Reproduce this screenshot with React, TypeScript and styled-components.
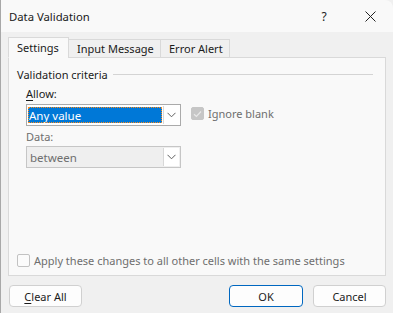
import styled, { createGlobalStyle } from "styled-components";

const Global = createGlobalStyle`
  html, body {
    margin: 0;
    padding: 0;
    background: #f0f0f0;
  }
  * {
    box-sizing: border-box;
  }
`;

const Window = styled.div`
  width: 393px;
  height: 313px;
  background: #f0f0f0;
  border-left: 1px solid #a8a8a8;
  border-top-right-radius: 8px;
  overflow: hidden;
  font-family: "Noto Sans", "Open Sans", sans-serif;
  font-size: 11px;
  color: #1b1b1b;
  display: flex;
  flex-direction: column;
`;

const TitleBar = styled.div`
  height: 32px;
  background: #f9f9f9;
  display: flex;
  align-items: center;
  padding-left: 8px;
`;

const Title = styled.div`
  flex: 1;
  font-size: 11.3px;
  color: #1a1a1a;
`;

const TitleButton = styled.div`
  width: 46px;
  height: 32px;
  display: flex;
  align-items: center;
  justify-content: center;
  font-size: 12px;
  color: #222;
`;

const Body = styled.div`
  flex: 1;
  display: flex;
  flex-direction: column;
  padding: 5px 7px 0 7px;
`;

const TabStrip = styled.div`
  display: flex;
  align-items: flex-end;
  height: 21px;
  position: relative;
  z-index: 1;
  margin-bottom: -1px;
`;

const Tab = styled.div<{ $active?: boolean; $w: number }>`
  width: ${(p) => p.$w}px;
  height: ${(p) => (p.$active ? "21px" : "19px")};
  padding-left: 8px;
  display: flex;
  align-items: center;
  background: ${(p) => (p.$active ? "#f9f9f9" : "#f0f0f0")};
  border: 1px solid #d9d9d9;
  border-bottom: ${(p) => (p.$active ? "1px solid #f9f9f9" : "1px solid #d9d9d9")};
  margin-left: ${(p) => (p.$active ? "0" : "-1px")};
  color: #1b1b1b;
`;

const Panel = styled.div`
  width: 378px;
  height: 219px;
  background: #f9f9f9;
  border: 1px solid #d9d9d9;
  padding: 8px 7px 0 8px;
  display: flex;
  flex-direction: column;
`;

const GroupHeader = styled.div`
  display: flex;
  align-items: center;
  gap: 5px;
  height: 16px;
`;

const GroupRule = styled.div`
  flex: 1;
  height: 1px;
  background: #d4d4d4;
  margin-right: 5px;
`;

const Criteria = styled.div`
  padding-left: 9px;
  display: flex;
  flex-direction: column;
`;

const FieldLabel = styled.div<{ $disabled?: boolean }>`
  height: 16px;
  line-height: 16px;
  margin-top: ${(p) => (p.$disabled ? "3px" : "4px")};
  margin-bottom: ${(p) => (p.$disabled ? "1px" : "2px")};
  color: ${(p) => (p.$disabled ? "#6e6e6e" : "#1b1b1b")};
`;

const Mnemonic = styled.span`
  text-decoration: underline;
  text-underline-offset: 2px;
`;

const Row = styled.div`
  display: flex;
  align-items: flex-start;
  gap: 10px;
`;

const Select = styled.div<{ $disabled?: boolean }>`
  width: 155px;
  height: 22px;
  border: 1px solid ${(p) => (p.$disabled ? "#c6c6c6" : "#aaaaaa")};
  background: ${(p) => (p.$disabled ? "#efefef" : "#ffffff")};
  display: flex;
  align-items: stretch;
`;

const SelectValue = styled.div<{ $selected?: boolean; $disabled?: boolean }>`
  flex: 1;
  margin: ${(p) => (p.$selected ? "2px 0 2px 1px" : "0")};
  padding-left: ${(p) => (p.$selected ? "1px" : "3px")};
  display: flex;
  align-items: center;
  font-size: 11.5px;
  background: ${(p) => (p.$selected ? "#0078d7" : "transparent")};
  outline: ${(p) => (p.$selected ? "1px dotted #ff8c1a" : "none")};
  outline-offset: -1px;
  color: ${(p) => (p.$selected ? "#ffffff" : p.$disabled ? "#6e6e6e" : "#1b1b1b")};
`;

const ArrowBox = styled.div`
  width: 16px;
  border-left: 1px solid #d8d8d8;
  background: #ffffff;
  margin: 1px;
  display: flex;
  align-items: center;
  justify-content: center;
`;

const CheckRow = styled.label<{ $top?: number; $bottom?: number }>`
  display: flex;
  align-items: center;
  gap: 4px;
  color: #6e6e6e;
  margin-top: ${(p) => p.$top ?? 0}px;
  margin-bottom: ${(p) => p.$bottom ?? 0}px;
`;

const CheckBox = styled.div<{ $checked?: boolean }>`
  width: 13px;
  height: 13px;
  border-radius: 2px;
  border: 1px solid ${(p) => (p.$checked ? "#c6c6c6" : "#c2c2c2")};
  background: ${(p) => (p.$checked ? "#c6c6c6" : "#fbfbfb")};
  display: flex;
  align-items: center;
  justify-content: center;
`;

const Spacer = styled.div`
  flex: 1;
`;

const Footer = styled.div`
  display: flex;
  align-items: center;
  padding: 9px 0 0 1px;
  gap: 10px;
`;

const Button = styled.div<{ $default?: boolean }>`
  width: ${(p) => (p.$default ? "74px" : "73px")};
  height: 22px;
  border-radius: 4px;
  background: #fdfdfd;
  border: 1px solid ${(p) => (p.$default ? "#0067c0" : "#d0d0d0")};
  display: flex;
  align-items: center;
  justify-content: center;
  color: #1b1b1b;
`;

const Chevron = () => (
  <svg width="9" height="6" viewBox="0 0 9 6">
    <path d="M0.5 0.8 L4.5 4.8 L8.5 0.8" fill="none" stroke="#606060" strokeWidth="1" />
  </svg>
);

const Check = () => (
  <svg width="9" height="8" viewBox="0 0 9 8">
    <path d="M1 4.2 L3.4 6.5 L8 1.5" fill="none" stroke="#e8e8e8" strokeWidth="1.2" />
  </svg>
);

const App = () => {
  return (
    <Window>
      <Global />
      <TitleBar>
        <Title>Data Validation</Title>
        <TitleButton>?</TitleButton>
        <TitleButton>
          <svg width="11" height="11" viewBox="0 0 11 11">
            <path d="M0.5 0.5 L10.5 10.5 M10.5 0.5 L0.5 10.5" stroke="#222" strokeWidth="1" />
          </svg>
        </TitleButton>
      </TitleBar>
      <Body>
        <TabStrip>
          <Tab $active $w={61}>Settings</Tab>
          <Tab $w={93}>Input Message</Tab>
          <Tab $w={70}>Error Alert</Tab>
        </TabStrip>
        <Panel>
          <GroupHeader>
            Validation criteria
            <GroupRule />
          </GroupHeader>
          <Criteria>
            <FieldLabel>
              <Mnemonic>A</Mnemonic>llow:
            </FieldLabel>
            <Row>
              <Select>
                <SelectValue $selected>Any value</SelectValue>
                <ArrowBox>
                  <Chevron />
                </ArrowBox>
              </Select>
              <CheckRow $top={2}>
                <CheckBox $checked>
                  <Check />
                </CheckBox>
                Ignore blank
              </CheckRow>
            </Row>
            <FieldLabel $disabled>Data:</FieldLabel>
            <Row>
              <Select $disabled>
                <SelectValue $disabled>between</SelectValue>
                <ArrowBox>
                  <Chevron />
                </ArrowBox>
              </Select>
            </Row>
          </Criteria>
          <Spacer />
          <CheckRow $bottom={7}>
            <CheckBox />
            Apply these changes to all other cells with the same settings
          </CheckRow>
        </Panel>
        <Footer>
          <Button>
            <span>
              <Mnemonic>C</Mnemonic>lear All
            </span>
          </Button>
          <Spacer />
          <Button $default>OK</Button>
          <Button>Cancel</Button>
        </Footer>
      </Body>
    </Window>
  );
};

export default App;
